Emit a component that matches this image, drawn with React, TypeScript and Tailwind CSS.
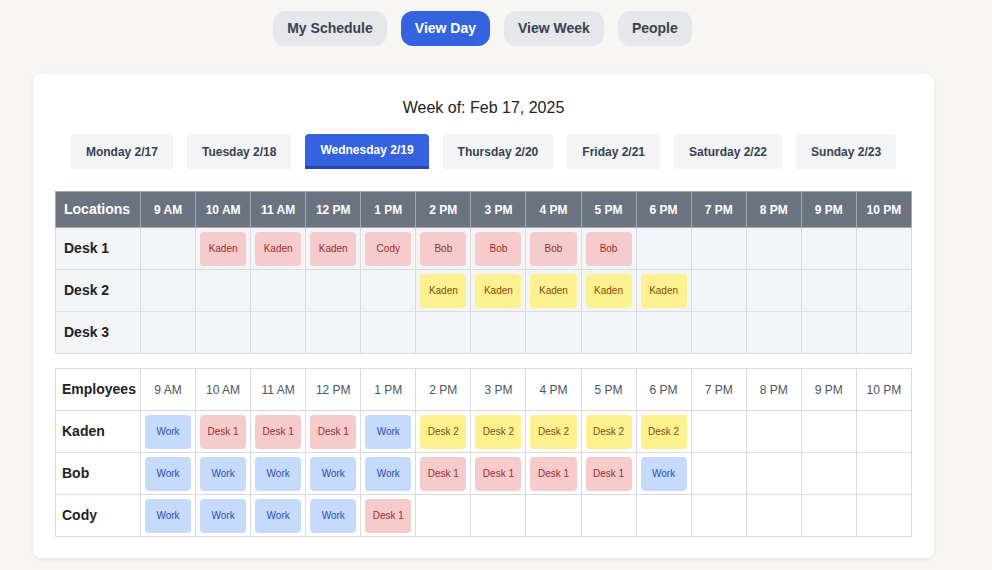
import React, { useState } from 'react';

type Chip = { label: string; color: 'red' | 'yellow' | 'blue' } | null;

const hours = ['9 AM', '10 AM', '11 AM', '12 PM', '1 PM', '2 PM', '3 PM', '4 PM', '5 PM', '6 PM', '7 PM', '8 PM', '9 PM', '10 PM'];

const days = ['Monday 2/17', 'Tuesday 2/18', 'Wednesday 2/19', 'Thursday 2/20', 'Friday 2/21', 'Saturday 2/22', 'Sunday 2/23'];

const chipStyles = {
  red: 'bg-[#f6cbcc] text-[#9b2c2c]',
  yellow: 'bg-[#fcf08f] text-[#854d0e]',
  blue: 'bg-[#c6dbfb] text-[#2b4bb8]',
};

function row(spec: (string | null)[], yellow = false): Chip[] {
  const out: Chip[] = [];
  for (let i = 0; i < 14; i++) {
    const s = spec[i];
    if (!s) out.push(null);
    else if (s === 'Work') out.push({ label: s, color: 'blue' });
    else if (s === 'Desk 2' || yellow) out.push({ label: s, color: 'yellow' });
    else out.push({ label: s, color: 'red' });
  }
  return out;
}

const locations = [
  { name: 'Desk 1', cells: row([null, 'Kaden', 'Kaden', 'Kaden', 'Cody', 'Bob', 'Bob', 'Bob', 'Bob']) },
  { name: 'Desk 2', cells: row([null, null, null, null, null, 'Kaden', 'Kaden', 'Kaden', 'Kaden', 'Kaden'], true) },
  { name: 'Desk 3', cells: row([]) },
];

const employees = [
  { name: 'Kaden', cells: row(['Work', 'Desk 1', 'Desk 1', 'Desk 1', 'Work', 'Desk 2', 'Desk 2', 'Desk 2', 'Desk 2', 'Desk 2']) },
  { name: 'Bob', cells: row(['Work', 'Work', 'Work', 'Work', 'Work', 'Desk 1', 'Desk 1', 'Desk 1', 'Desk 1', 'Work']) },
  { name: 'Cody', cells: row(['Work', 'Work', 'Work', 'Work', 'Desk 1']) },
];

function ChipCell({ chip }: { chip: Chip }) {
  return (
    <td className="px-[4px] py-[3px] border border-[#d9dbe0]">
      {chip && (
        <div className={`h-[34px] rounded-[4px] flex items-center justify-center text-[10px] ${chipStyles[chip.color]}`}>
          {chip.label}
        </div>
      )}
    </td>
  );
}

export default function App() {
  const [tab, setTab] = useState('View Day');
  const [day, setDay] = useState('Wednesday 2/19');

  return (
    <div className="min-h-[570px] bg-[#f7f6f3] pt-[11px] font-['Liberation_Sans',Arial,sans-serif] text-[#222]">
      <div className="w-[901px] ml-[33px]">
        <nav className="flex justify-center gap-[14px] pr-[2px]">
          {['My Schedule', 'View Day', 'View Week', 'People'].map(t => (
            <button
              key={t}
              onClick={() => setTab(t)}
              className={`h-[35px] px-[14px] rounded-xl text-[14px] font-bold ${
                tab === t ? 'bg-[#3563e0] text-white' : 'bg-[#e5e7eb] text-[#374151]'
              }`}
            >
              {t}
            </button>
          ))}
        </nav>

        <div className="mt-[28px] bg-white rounded-lg shadow-[0_1px_4px_rgba(0,0,0,0.08)] p-[22px] pb-[21px]">
          <h2 className="text-center text-[16px] leading-[24px] text-[#222] mb-[14px]">Week of: Feb 17, 2025</h2>

          <div className="flex justify-center gap-[14px] mb-[22px]">
            {days.map(d => (
              <button
                key={d}
                onClick={() => setDay(d)}
                className={`h-[35px] px-[15px] rounded-t text-[12px] font-bold ${
                  day === d
                    ? 'bg-[#3563e0] text-white border-b-[3px] border-[#2545b8]'
                    : 'bg-[#f3f4f6] text-[#374151]'
                }`}
              >
                {d}
              </button>
            ))}
          </div>

          <table className="w-full table-fixed border-collapse border border-[#d1d5db]">
            <colgroup>
              <col className="w-[85px]" />
              {hours.map(h => (
                <col key={h} />
              ))}
            </colgroup>
            <thead>
              <tr className="h-[36px] bg-[#6b7280] text-white">
                <th className="p-0 text-left pl-[8px] text-[14px] font-bold border border-[#a3a8b2]">Locations</th>
                {hours.map(h => (
                  <th key={h} className="p-0 text-[12px] font-bold border border-[#a3a8b2]">
                    {h}
                  </th>
                ))}
              </tr>
            </thead>
            <tbody className="bg-[#f3f4f6]">
              {locations.map(l => (
                <tr key={l.name} className="h-[42px]">
                  <td className="pl-[8px] text-[14px] font-bold border border-[#d9dbe0]">{l.name}</td>
                  {l.cells.map((c, i) => (
                    <ChipCell key={i} chip={c} />
                  ))}
                </tr>
              ))}
            </tbody>
          </table>

          <table className="w-full table-fixed border-collapse border border-[#d1d5db] mt-[14px]">
            <colgroup>
              <col className="w-[85px]" />
              {hours.map(h => (
                <col key={h} />
              ))}
            </colgroup>
            <thead>
              <tr className="h-[42px] bg-white">
                <th className="p-0 text-left pl-[6px] text-[14px] font-bold text-[#222] border border-[#d9dbe0]">Employees</th>
                {hours.map(h => (
                  <th key={h} className="p-0 text-[12px] font-normal text-[#4b5563] border border-[#d9dbe0]">
                    {h}
                  </th>
                ))}
              </tr>
            </thead>
            <tbody className="bg-white">
              {employees.map(e => (
                <tr key={e.name} className="h-[42px]">
                  <td className="pl-[6px] text-[14px] font-bold border border-[#d9dbe0]">{e.name}</td>
                  {e.cells.map((c, i) => (
                    <ChipCell key={i} chip={c} />
                  ))}
                </tr>
              ))}
            </tbody>
          </table>
        </div>
      </div>
    </div>
  );
}
